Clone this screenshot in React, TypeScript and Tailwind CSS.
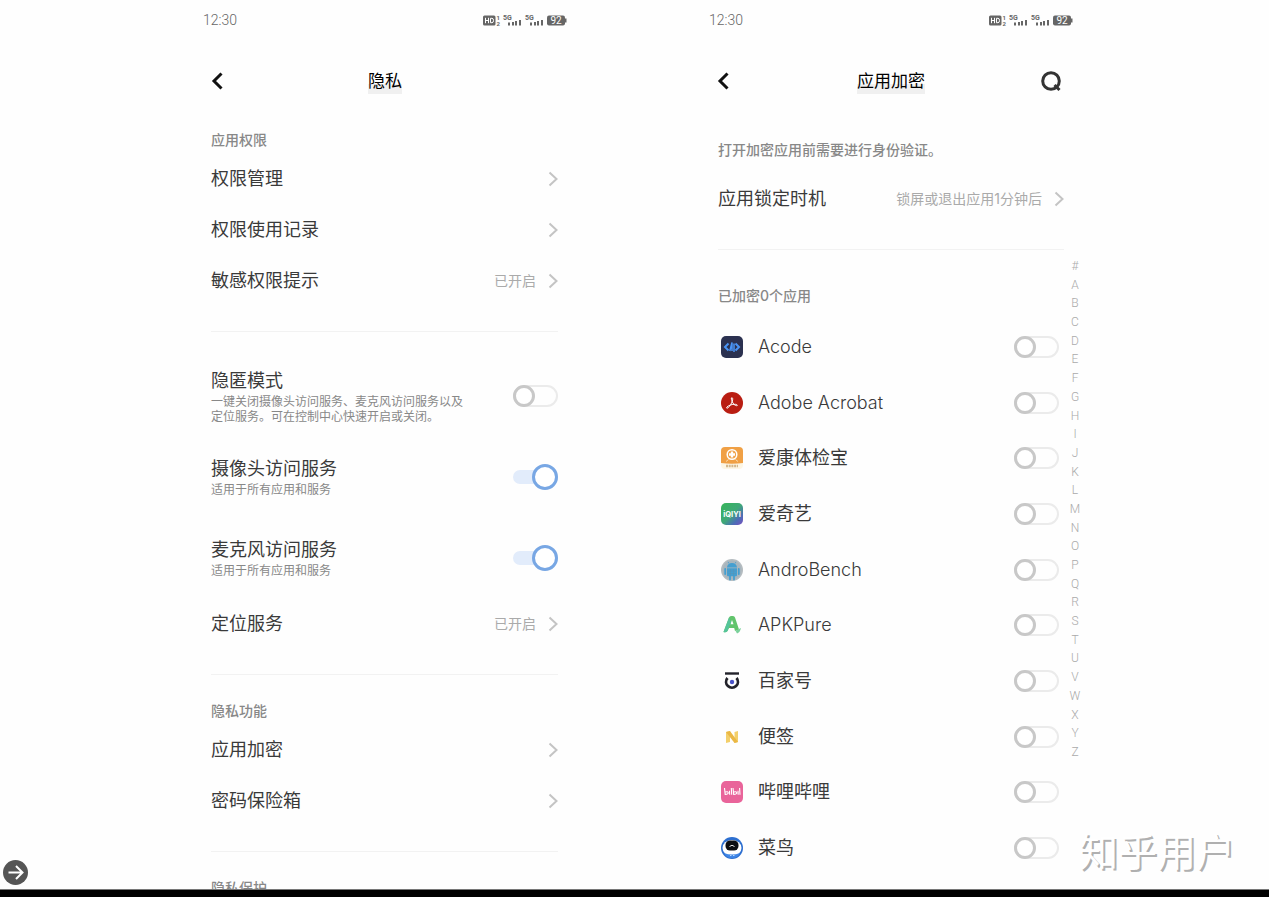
import { ReactNode, useState } from "react";

type App = { name: string; latin?: boolean; icon: ReactNode };

const indexLetters = "#ABCDEFGHIJKLMNOPQRSTUVWXYZ".split("");

const apps: App[] = [
    {
        name: "Acode",
        latin: true,
        icon: (
            <>
                <rect width="22" height="22" rx="5" fill="#2b3150" />
                <path d="M7.5 7.5L4 11l3.500 3.500M14.500 7.500L18 11l-3.500 3.500" fill="none" stroke="#4a94f5" strokeWidth="2" />
                <path d="M8.800 15L11 6.500V15M13 16V7.500" fill="none" stroke="#4a94f5" strokeWidth="1.5" />
            </>
        ),
    },
    {
        name: "Adobe Acrobat",
        latin: true,
        icon: (
            <>
                <circle cx="11" cy="11" r="11" fill="#b91d12" />
                <path
                    d="M10.300 6c.9-1 1.700.2 1.300 2-.5 2.600-2.600 6.200-4.700 7.900-1 .8-1.800.1-.9-.9 1.500-1.600 5-2.900 8.300-2.700 2.300.1 2.700 1.400 1.200 1.400-2.400-.1-5.200-4.300-5.200-7.700z"
                    fill="none"
                    stroke="#fff"
                    strokeWidth="1"
                />
            </>
        ),
    },
    {
        name: "爱康体检宝",
        icon: (
            <>
                <rect width="22" height="22" rx="4" fill="#fdf6e4" />
                <path d="M0 16V4a4 4 0 0 1 4-4h14a4 4 0 0 1 4 4v12q-11 1.500-22 0z" fill="#f0a045" />
                <circle cx="11" cy="7.5" r="4.8" fill="none" stroke="#fff" strokeWidth="1.5" />
                <path d="M11 4.500v6M8 7.500h6" stroke="#fff" strokeWidth="2.4" />
                <path d="M5 14.500l2.500-2M17 14.500l-2.500-2" stroke="#fbdcae" />
                <path d="M5 19h12" stroke="#d4b88c" strokeWidth="2.4" strokeDasharray="2 .7" />
            </>
        ),
    },
    {
        name: "爱奇艺",
        icon: (
            <>
                <defs>
                    <linearGradient id="iqiyi" x1="0" y1="0" x2="1" y2="1">
                        <stop offset="0" stopColor="#35b558" />
                        <stop offset=".5" stopColor="#3fa878" />
                        <stop offset=".75" stopColor="#4a6fb5" />
                        <stop offset="1" stopColor="#7a4fc0" />
                    </linearGradient>
                </defs>
                <rect width="22" height="22" rx="5" fill="url(#iqiyi)" />
                <text x="11" y="13.5" textAnchor="middle" fontSize="7.5" fontWeight="700" fill="#fff">iQIYI</text>
            </>
        ),
    },
    {
        name: "AndroBench",
        latin: true,
        icon: (
            <>
                <circle cx="11" cy="11" r="11" fill="#b5bcc0" />
                <circle cx="11" cy="11" r="9.5" fill="#a8b6be" />
                <path d="M6 8.500a5 4.500 0 0 1 10 0zM6 9.200h10v7a1 1 0 0 1-1 1H7a1 1 0 0 1-1-1z" fill="#459fd0" />
                <path d="M4.200 10v5M17.800 10v5M9 16.500v4M13 16.500v4" stroke="#459fd0" strokeWidth="1.8" strokeLinecap="round" />
                <path d="M8 4.500L7 2.800M14 4.500l1-1.700" stroke="#459fd0" strokeWidth=".8" />
                <path d="M7 12h8M7 14.500h8M9.500 10v7M12.500 10v7" stroke="#5d8fae" strokeWidth=".4" />
            </>
        ),
    },
    {
        name: "APKPure",
        latin: true,
        icon: (
            <>
                <path d="M2.500 18L8 3.500Q8.600 2 10 2h2q1.500 0 2 1.500l4 12-4 1.500-.8-3H8L6.500 17q-1.500 2-4 1zM9.500 10.300h3L11 6z" fill="#62c46c" fillRule="evenodd" />
                <path d="M2.500 18L8 3.500l2 4.500-3.500 9q-1.500 2-4 1z" fill="#55c49a" />
                <path d="M14.500 16.800l5.500-2.800q-1 4.500-4 5.500z" fill="#7ad19b" />
            </>
        ),
    },
    {
        name: "百家号",
        icon: (
            <>
                <path d="M4 3.500h14" stroke="#22222a" strokeWidth="2.4" />
                <path d="M6.500 8a5.900 5.900 0 1 0 9 0" fill="none" stroke="#22222a" strokeWidth="2.8" />
                <circle cx="11" cy="12" r="2.2" fill="#4a52c8" />
            </>
        ),
    },
    {
        name: "便签",
        icon: (
            <>
                <path d="M5 6l4-1v11l-4 1z" fill="#f3cf6a" />
                <path d="M13.500 6L17 5v11l-3.500 1z" fill="#f3cf6a" />
                <path d="M5 6l4-1 8 11-3.500 1z" fill="#eab744" />
            </>
        ),
    },
    {
        name: "哔哩哔哩",
        icon: (
            <>
                <rect width="22" height="22" rx="5" fill="#e9649a" />
                <path
                    d="M3.500 7l.7 6.500q3.300-.3 3-1.800t-2.700-.6M8.500 9.800l.2 4M10.300 7l.4 6.800M12 7l.7 6.500q3.300-.3 3-1.800t-2.700-.6M17 9.800l.2 4M18.600 7l.4 6.800"
                    fill="none"
                    stroke="#fff"
                    strokeWidth="1.1"
                />
            </>
        ),
    },
    {
        name: "菜鸟",
        icon: (
            <>
                <circle cx="11" cy="11" r="11" fill="#2d6fd0" />
                <ellipse cx="11" cy="11" rx="9.5" ry="8" fill="#fff" />
                <path d="M3 16q8 3 16 0-2 5-8 5t-8-5z" fill="#3f86e6" />
                <path d="M9 18.500h1.500M12 18.500h1.500" stroke="#bcd8fb" />
                <rect x="4.5" y="3.5" width="13" height="10" rx="4.5" fill="#0b0d12" />
                <path d="M8.500 9.500q2.500-2.500 5 0" fill="none" stroke="#fff" strokeWidth=".9" />
            </>
        ),
    },
];

function StatusBar() {
    return (
        <div className="flex h-10 items-center justify-between px-[11px] text-[#666]">
            <span className="font-['Roboto'] text-sm font-light">12:30</span>
            <svg className="h-[14px] w-[84px]" viewBox="0 0 84 14" fill="#666" fontFamily="Roboto, sans-serif">
                <rect x="0" y="2.5" width="12.5" height="10" rx="1.5" />
                <path d="M2.500 4.800v5.400M5.500 4.800v5.400M2.500 7.500h3M7.500 5.300H9q1.500 0 1.500 2.200T9 9.700H7.500z" stroke="#fff" fill="none" />
                <text x="13.5" y="6.5" fontSize="6" fontWeight="700">1</text>
                <text x="13.5" y="12.5" fontSize="6" fontWeight="700">2</text>
                {[20, 42].map((x) => (
                    <g key={x}>
                        <text x={x} y="6.5" fontSize="7" fontWeight="700">5G</text>
                        <path d={`M${x + 5} 9.500h2v3h-2zM${x + 9} 9h2v3.500h-2zM${x + 12} 8h2v4.500h-2zM${x + 16} 7h2v5.500h-2z`} />
                    </g>
                ))}
                <rect x="64" y="2.5" width="18" height="10" rx="2" />
                <rect x="82" y="5.5" width="1.5" height="4" />
                <text x="73" y="11" fontSize="10" textAnchor="middle" fill="#fff">92</text>
            </svg>
        </div>
    );
}

function Header({ title, search }: { title: string; search?: boolean }) {
    return (
        <header className="grid h-[82px] grid-cols-[1fr_auto_1fr] items-center px-[18px]">
            <button type="button" aria-label="返回" className="w-[14px]">
                <svg className="h-[18px] w-[14px]" viewBox="0 0 14 18" fill="none" stroke="#111" strokeWidth="3">
                    <path d="M11.500 1.500L4 9l7.500 7.500" />
                </svg>
            </button>
            <h1 className="bg-linear-to-b from-transparent from-60% to-[#f0f0f0] to-60% text-[17px] leading-[26px] text-black">{title}</h1>
            {search && (
                <button type="button" aria-label="搜索" className="mr-1 justify-self-end">
                    <svg className="size-[22px]" viewBox="0 0 22 22" fill="none" stroke="#333" strokeWidth="3">
                        <circle cx="11" cy="11" r="8.3" />
                        <path d="M14.500 15l5 5" />
                    </svg>
                </button>
            )}
        </header>
    );
}

function Chevron() {
    return (
        <svg className="h-4 w-[10px]" viewBox="0 0 10 16" fill="none" stroke="#c4c4c4" strokeWidth="2">
            <path d="M1.500 1.500L8.500 8l-7 6.500" />
        </svg>
    );
}

function LinkRow({ title, value }: { title: string; value?: string }) {
    return (
        <a href="#" className="flex h-[51px] items-center">
            <span className="flex-1 text-lg">{title}</span>
            {value && <span className="mr-3 text-sm text-[#aaa]">{value}</span>}
            <Chevron />
        </a>
    );
}

function Switch({ id, on = false }: { id: string; on?: boolean }) {
    const [checked, setChecked] = useState(on);
    return (
        <input
            id={id}
            type="checkbox"
            role="switch"
            checked={checked}
            onChange={() => setChecked(!checked)}
            className="relative h-[22px] w-[45px] shrink-0 appearance-none rounded-full border-2 border-[#ebebeb] before:absolute before:-top-0.5 before:-left-0.5 before:size-[22px] before:rounded-full before:border-3 before:border-[#c8c8c8] before:bg-white checked:h-[14px] checked:border-0 checked:bg-[#e2ecfb] checked:before:-top-1.5 checked:before:left-[19px] checked:before:size-[26px] checked:before:border-[#78a7e4]"
        />
    );
}

function SwitchRow({ id, title, note, on, className }: { id: string; title: string; note: string; on?: boolean; className: string }) {
    return (
        <div className={`flex items-center justify-between ${className}`}>
            <label htmlFor={id}>
                <span className="block text-lg leading-[26px]">{title}</span>
                <span className="block max-w-[260px] text-xs leading-[15px] text-[#888]">{note}</span>
            </label>
            <Switch id={id} on={on} />
        </div>
    );
}

function SectionLabel({ children }: { children: ReactNode }) {
    return <h2 className="pt-2 pb-[3px] text-sm leading-5 font-medium text-[#888]">{children}</h2>;
}

function Divider() {
    return <hr className="mt-[25px] mb-[18px] border-[#f2f2f2]" />;
}

function PrivacyScreen() {
    return (
        <section className="max-w-[386px] flex-1 overflow-hidden">
            <StatusBar />
            <Header title="隐私" />
            <div className="pr-5 pl-[19px]">
                <SectionLabel>应用权限</SectionLabel>
                <LinkRow title="权限管理" />
                <LinkRow title="权限使用记录" />
                <LinkRow title="敏感权限提示" value="已开启" />
                <Divider />
                <SwitchRow
                    id="stealth"
                    title="隐匿模式"
                    note="一键关闭摄像头访问服务、麦克风访问服务以及定位服务。可在控制中心快速开启或关闭。"
                    className="pt-[18px] pb-3"
                />
                <SwitchRow id="camera" title="摄像头访问服务" note="适用于所有应用和服务" on className="py-5" />
                <SwitchRow id="mic" title="麦克风访问服务" note="适用于所有应用和服务" on className="py-5" />
                <LinkRow title="定位服务" value="已开启" />
                <Divider />
                <SectionLabel>隐私功能</SectionLabel>
                <LinkRow title="应用加密" />
                <LinkRow title="密码保险箱" />
                <Divider />
                <SectionLabel>隐私保护</SectionLabel>
            </div>
        </section>
    );
}

function AppLockScreen() {
    return (
        <section className="relative flex max-w-[386px] flex-1 flex-col">
            <StatusBar />
            <Header title="应用加密" search />
            <div className="flex flex-1 flex-col px-5">
                <p className="pt-[18px] pb-[13px] text-sm leading-5 font-medium text-[#888]">打开加密应用前需要进行身份验证。</p>
                <LinkRow title="应用锁定时机" value="锁屏或退出应用1分钟后" />
                <Divider />
                <h2 className="pt-[18px] pb-[13px] text-sm leading-5 font-medium text-[#888]">已加密0个应用</h2>
                <ul className="grid flex-1 auto-rows-fr pb-[13px]">
                    {apps.map((app, i) => (
                        <li key={app.name} className="flex items-center pr-[5px] pl-[3px]">
                            <svg className="mr-[15px] size-[22px]" viewBox="0 0 22 22">{app.icon}</svg>
                            <label htmlFor={`app-${i}`} className={`flex-1 text-lg ${app.latin ? "font-light" : ""}`}>{app.name}</label>
                            <Switch id={`app-${i}`} />
                        </li>
                    ))}
                </ul>
            </div>
            {/* Alphabet index floating over the right edge of the list */}
            <nav className="absolute top-[257px] right-0 flex h-[504px] w-[18px] flex-col justify-between text-center font-['Roboto'] text-xs font-light text-[#aaa]">
                {indexLetters.map((letter) => (
                    <a key={letter} href="#" className="leading-[18px]">{letter}</a>
                ))}
            </nav>
        </section>
    );
}

export default function App() {
    return (
        <div className="flex h-screen flex-col overflow-hidden bg-[#fefefe] font-['Inter','Noto_Sans_CJK_SC',sans-serif] text-[#3a3a3a]">
            <main className="relative flex min-h-0 flex-1 justify-center gap-[120px] pl-[7px]">
                <PrivacyScreen />
                <AppLockScreen />
                <button type="button" aria-label="下一页" className="absolute bottom-1 left-[3px] size-[25px] rounded-full bg-[#555]">
                    <svg viewBox="0 0 25 25" fill="none" stroke="#fff" strokeWidth="2">
                        <path d="M5.500 12.500h14M13 6l6.500 6.500L13 19" />
                    </svg>
                </button>
                <span className="absolute right-[34px] bottom-2.5 text-[39px] leading-[54px] text-white [text-shadow:2px_2px_0_#b0b0b0]">知乎用户</span>
            </main>
            <div className="h-2 border-t border-[#777] bg-black" />
        </div>
    );
}
